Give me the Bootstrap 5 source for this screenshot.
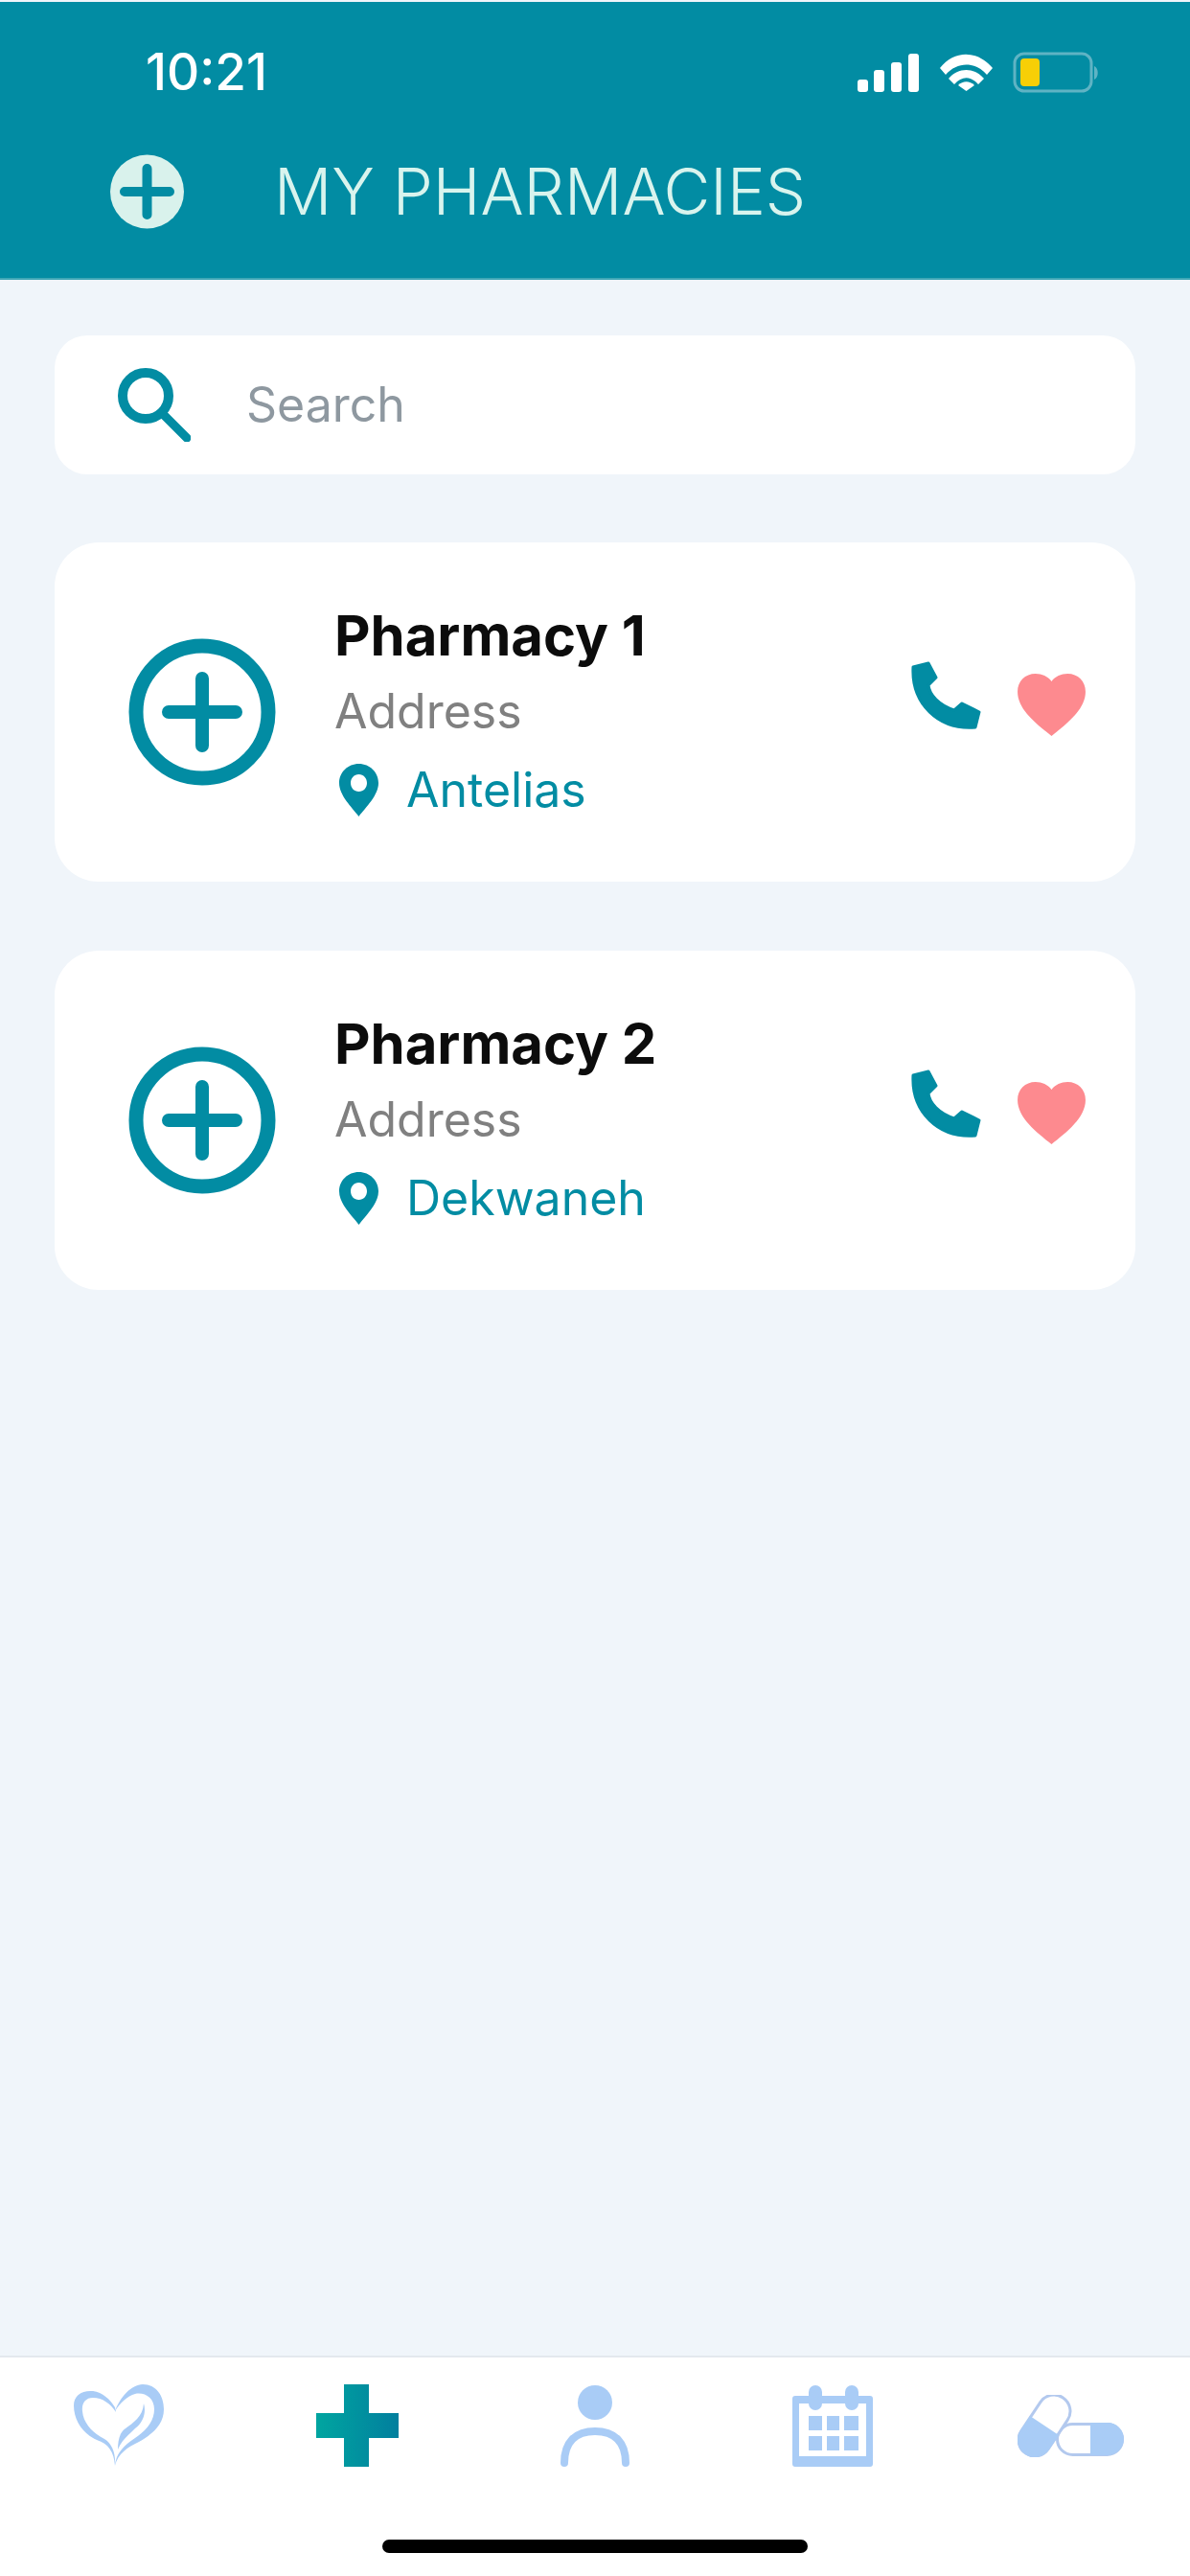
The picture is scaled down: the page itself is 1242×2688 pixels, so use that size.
<!DOCTYPE html>
<html lang="en">
<head>
    <meta charset="UTF-8">
    <meta name="viewport" content="width=device-width, initial-scale=1.0">
    <title>My Pharmacies</title>
    <link href="https://cdn.jsdelivr.net/npm/bootstrap@5.3.0/dist/css/bootstrap.min.css" rel="stylesheet">
    <style>
        body { font-family: Inter, "Liberation Sans", sans-serif; background: #f0f5fa; min-height: 2688px; padding-top: 2px; }
        .app-top { background: #028ca3; height: 290px; border-bottom: 2px solid #3fa7b6; }
        .status-row { height: 108px; padding: 45px 94px 0 152px; }
        .clock { color: #fff; font-size: 53px; font-weight: 500; line-height: 56px; }
        .status-icons { margin-top: 7px; }
        .title-row { padding: 51px 0 0 115px; gap: 94px; }
        .page-title { color: #d9f4ee; font-size: 67px; font-weight: 300; line-height: 78px; margin: 0; }
        .main-area { padding: 58px 57px 0 57px; }
        .search-box { background: #fff; height: 145px; border-radius: 34px; padding-left: 66px; gap: 58px; margin-bottom: 71px; border: 0; }
        .search-text { color: #8e98a0; font-size: 50px; }
        .shop-card { background: #fff; height: 354px; border: 0; border-radius: 46px; margin-bottom: 72px; padding: 0 52px 0 77px; }
        .shop-info { margin-left: 61px; padding-top: 4px; }
        .shop-name { color: #0c0c0c; font-size: 58px; font-weight: 700; line-height: 76px; margin: 0; }
        .shop-address { color: #808080; font-size: 50px; line-height: 82px; }
        .shop-place { color: #028ca3; font-size: 50px; line-height: 82px; gap: 29px; padding-left: 5px; }
        .shop-actions { gap: 37px; margin-bottom: 28px; }
        .heart-icon { margin-top: 13px; }
        .tab-bar { background: #fff; height: 230px; border-top: 2px solid #e4e8ee; }
        .tab-icons { padding-top: 28px; }
        .home-line { width: 444px; height: 14px; background: #000; border-radius: 7px; margin: 76px auto 0; }
    </style>
</head>
<body class="d-flex flex-column">
    <header class="app-top">
        <div class="status-row d-flex justify-content-between align-items-start">
            <span class="clock">10:21</span>
            <svg class="status-icons" width="253" height="44" viewBox="0 0 253 44">
                <g fill="#fff">
                    <rect x="0" y="29" width="11" height="13" rx="3"/>
                    <rect x="17" y="19" width="11" height="23" rx="3"/>
                    <rect x="35" y="11" width="11" height="31" rx="3"/>
                    <rect x="53" y="2" width="11" height="40" rx="3"/>
                    <path d="M86 17 C101 -2 125 -2 141 17 L135 24 C123 10 104 10 92 24 Z"/>
                    <path d="M95 28 C105 16 122 16 132 28 L126 34 C118 25 109 25 101 34 Z"/>
                    <path d="M105 35 C110 30 117 30 122 35 L113.5 41 Z"/>
                </g>
                <rect x="164" y="2" width="80" height="39" rx="10" fill="none" stroke="#5fb3c4" stroke-width="3"/>
                <rect x="170" y="7" width="20" height="29" rx="4" fill="#f7cf06"/>
                <path d="M247 15 C252 17 252 27 247 29 Z" fill="#5fb3c4"/>
            </svg>
        </div>
        <div class="title-row d-flex align-items-center">
            <svg width="77" height="78" viewBox="0 0 77 78">
                <circle cx="38.5" cy="39" r="38.5" fill="#d9f2ec"/>
                <path d="M38.5 15 V63 M15 39 H62" stroke="#028ca3" stroke-width="10" stroke-linecap="round"/>
            </svg>
            <h1 class="page-title">MY PHARMACIES</h1>
        </div>
    </header>

    <main class="main-area flex-grow-1">
        <div class="search-box card flex-row align-items-center">
            <svg width="76" height="77" viewBox="0 0 76 77" fill="none" stroke="#028ca3">
                <circle cx="29" cy="29" r="24" stroke-width="10"/>
                <path d="M46 47 L72 73" stroke-width="9" stroke-linecap="round"/>
            </svg>
            <span class="search-text">Search</span>
        </div>

        <div class="shop-card card flex-row align-items-center">
            <svg width="154" height="154" viewBox="0 0 154 154" fill="none" stroke="#028ca3">
                <circle cx="77" cy="77" r="69" stroke-width="15"/>
                <path d="M77 42 V112 M42 77 H112" stroke-width="14" stroke-linecap="round"/>
            </svg>
            <div class="shop-info flex-grow-1">
                <h2 class="shop-name">Pharmacy 1</h2>
                <div class="shop-address">Address</div>
                <div class="shop-place d-flex align-items-center">
                    <svg width="41" height="55" viewBox="0 0 41 55">
                        <path fill-rule="evenodd" fill="#028ca3" d="M20.5 0 C32 0 41 9 41 20 C41 33 28 45 20.5 55 C13 45 0 33 0 20 C0 9 9 0 20.5 0 Z M20.5 11 C15.5 11 12 15 12 20 C12 25 15.5 29 20.5 29 C25.5 29 29 25 29 20 C29 15 25.5 11 20.5 11 Z"/>
                    </svg>
                    <span>Antelias</span>
                </div>
            </div>
            <div class="shop-actions d-flex align-items-start">
                <svg width="74" height="72" viewBox="0 0 74 72">
                    <path fill="#028ca3" stroke="#028ca3" stroke-width="3" stroke-linejoin="round" d="M2 6 L18 2 L26 17 L18 25 C19 35 29 46 45 51 L53 44 L71 53 L67 69 C28 72 0 44 2 6 Z"/>
                </svg>
                <svg class="heart-icon" width="71" height="65" viewBox="0 0 72 66">
                    <path fill="#fd8a8f" d="M36 66 C20 53 0 38 0 19 C0 8 8 0 19 0 C26 0 32 3 36 8 C40 3 46 0 53 0 C64 0 72 8 72 19 C72 38 52 53 36 66 Z"/>
                </svg>
            </div>
        </div>

        <div class="shop-card card flex-row align-items-center">
            <svg width="154" height="154" viewBox="0 0 154 154" fill="none" stroke="#028ca3">
                <circle cx="77" cy="77" r="69" stroke-width="15"/>
                <path d="M77 42 V112 M42 77 H112" stroke-width="14" stroke-linecap="round"/>
            </svg>
            <div class="shop-info flex-grow-1">
                <h2 class="shop-name">Pharmacy 2</h2>
                <div class="shop-address">Address</div>
                <div class="shop-place d-flex align-items-center">
                    <svg width="41" height="55" viewBox="0 0 41 55">
                        <path fill-rule="evenodd" fill="#028ca3" d="M20.5 0 C32 0 41 9 41 20 C41 33 28 45 20.5 55 C13 45 0 33 0 20 C0 9 9 0 20.5 0 Z M20.5 11 C15.5 11 12 15 12 20 C12 25 15.5 29 20.5 29 C25.5 29 29 25 29 20 C29 15 25.5 11 20.5 11 Z"/>
                    </svg>
                    <span>Dekwaneh</span>
                </div>
            </div>
            <div class="shop-actions d-flex align-items-start">
                <svg width="74" height="72" viewBox="0 0 74 72">
                    <path fill="#028ca3" stroke="#028ca3" stroke-width="3" stroke-linejoin="round" d="M2 6 L18 2 L26 17 L18 25 C19 35 29 46 45 51 L53 44 L71 53 L67 69 C28 72 0 44 2 6 Z"/>
                </svg>
                <svg class="heart-icon" width="71" height="65" viewBox="0 0 72 66">
                    <path fill="#fd8a8f" d="M36 66 C20 53 0 38 0 19 C0 8 8 0 19 0 C26 0 32 3 36 8 C40 3 46 0 53 0 C64 0 72 8 72 19 C72 38 52 53 36 66 Z"/>
                </svg>
            </div>
        </div>
    </main>

    <footer class="tab-bar">
        <div class="tab-icons row g-0 align-items-center text-center">
            <div class="col">
                <svg width="94" height="86" viewBox="0 0 94 86" fill="#a9ccf6">
                    <path d="M43 85 C42 70 36 62 24 58 C10 52 0 38 0 22 C0 12 8 6 20 7 C30 8 38 16 43 24 L44 29 C38 20 30 14 20 14 C12 14 8 20 9 28 C10 42 22 52 32 57 C40 62 44 72 43 85 Z"/>
                    <path d="M43 28 C48 14 60 0 72 0 C86 0 94 12 94 26 C94 42 82 52 68 60 C56 66 46 72 43 85 C44 72 52 64 64 56 C76 48 84 38 84 26 C84 14 74 8 64 10 C56 12 48 20 43 28 Z"/>
                    <path d="M73 20 C72 34 62 40 54 46 C48 50 46 58 46 68 C50 58 58 52 64 46 C72 40 76 30 73 20 Z"/>
                </svg>
            </div>
            <div class="col">
                <svg width="86" height="86" viewBox="0 0 86 86">
                    <defs>
                        <linearGradient id="crossFill" x1="0" y1="0" x2="1" y2="0">
                            <stop offset="0" stop-color="#00a5a0"/>
                            <stop offset="1" stop-color="#027f9e"/>
                        </linearGradient>
                    </defs>
                    <path fill="url(#crossFill)" d="M29 0 H55 V30 H86 V56 H55 V86 H29 V56 H0 V30 H29 Z"/>
                </svg>
            </div>
            <div class="col">
                <svg width="72" height="85" viewBox="0 0 72 85" fill="none">
                    <circle cx="36" cy="18" r="18" fill="#a9ccf6"/>
                    <path d="M4 81 C4 60 15 48 36 48 C57 48 68 60 68 81" stroke="#a9ccf6" stroke-width="8" stroke-linecap="round"/>
                </svg>
            </div>
            <div class="col">
                <svg width="84" height="85" viewBox="0 0 84 85" fill="#a9ccf6">
                    <path fill-rule="evenodd" d="M3 11 H81 Q84 11 84 14 V82 Q84 85 81 85 H3 Q0 85 0 82 V14 Q0 11 3 11 Z M7 19 V74 H77 V19 Z"/>
                    <rect x="17" y="0" width="14" height="26" rx="7"/>
                    <rect x="55" y="0" width="14" height="26" rx="7"/>
                    <rect x="17" y="32" width="14" height="15"/><rect x="36" y="32" width="13" height="15"/><rect x="54" y="32" width="15" height="15"/>
                    <rect x="17" y="53" width="14" height="15"/><rect x="36" y="53" width="13" height="15"/><rect x="54" y="53" width="15" height="15"/>
                </svg>
            </div>
            <div class="col">
                <svg width="111" height="65" viewBox="0 0 111 65">
                    <rect x="41.5" y="30.5" width="68" height="32" rx="16" fill="#fff" stroke="#b3c9ee" stroke-width="3"/>
                    <path d="M76 29 H94 A17 17 0 0 1 94 63 H76 Z" fill="#a9ccf6"/>
                    <rect x="11" y="-3" width="34" height="70" rx="17" transform="rotate(33.7 28 32)" fill="#fff" stroke="#b3c9ee" stroke-width="3"/>
                    <path d="M13 22 L43 42 L33 57 A18 18 0 0 1 3 37 Z" fill="#a9ccf6"/>
                </svg>
            </div>
        </div>
        <div class="home-line"></div>
    </footer>
    <script src="https://cdn.jsdelivr.net/npm/bootstrap@5.3.0/dist/js/bootstrap.bundle.min.js"></script>
</body>
</html>
